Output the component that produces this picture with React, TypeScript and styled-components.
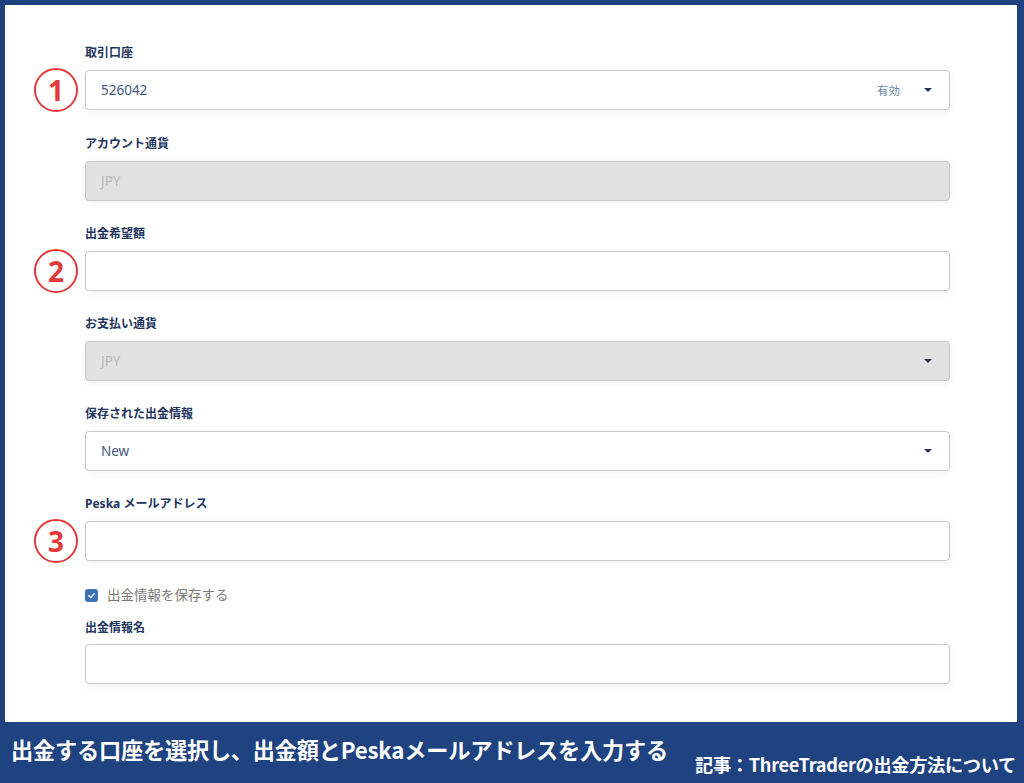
import { createGlobalStyle, styled } from 'styled-components';

const GlobalStyle = createGlobalStyle`
  html, body {
    margin: 0;
    padding: 0;
    background: #1f4381;
  }
  body {
    font-family: "Noto Sans", "Noto Sans CJK JP", sans-serif;
  }
`;

const Page = styled.div`
  width: 1024px;
  height: 783px;
  background: #1f4381;
  display: flex;
  flex-direction: column;
  overflow: hidden;
`;

const Panel = styled.div`
  margin: 5px 7px 0 5px;
  height: 717px;
  background: #ffffff;
  box-sizing: border-box;
  padding-top: 40px;
  display: flex;
  flex-direction: column;
`;

const Field = styled.div<{ $after?: number }>`
  display: grid;
  grid-template-columns: 80px 865px;
  margin-bottom: ${(p) => p.$after ?? 25}px;
`;

const Label = styled.div<{ $gap?: number }>`
  grid-column: 2;
  height: 16px;
  font-size: 12px;
  line-height: 16px;
  font-weight: 700;
  color: #23355c;
  margin-bottom: ${(p) => p.$gap ?? 9}px;
`;

const BadgeCell = styled.div`
  grid-column: 1;
  height: 40px;
  display: flex;
  align-items: center;
  justify-content: flex-end;
  padding-right: 7px;
`;

const Badge = styled.div`
  flex: none;
  width: 44px;
  height: 44px;
  box-sizing: border-box;
  border-radius: 50%;
  border: 2px solid #e23a3a;
  color: #e23a3a;
  display: flex;
  align-items: center;
  justify-content: center;
  font-family: "Noto Sans", sans-serif;
  font-weight: 700;
  font-size: 28px;
  line-height: 1;
`;

const Box = styled.div<{ $disabled?: boolean }>`
  grid-column: 2;
  height: 40px;
  box-sizing: border-box;
  border: 1px solid ${(p) => (p.$disabled ? '#c6c6c6' : '#c9c9c9')};
  border-radius: 4px;
  background: ${(p) => (p.$disabled ? '#e2e2e2' : '#ffffff')};
  box-shadow: 0 2px 8px rgba(0, 0, 0, 0.06);
  display: flex;
  align-items: center;
  padding: 0 16px 0 15px;
`;

const Value = styled.span<{ $muted?: boolean }>`
  flex: 1;
  font-size: 13.5px;
  color: ${(p) => (p.$muted ? '#b9b9b9' : '#45587a')};
`;

const Status = styled.span`
  font-size: 11.5px;
  color: #6b88a6;
  margin-right: 24px;
`;

const Caret = styled.span`
  width: 0;
  height: 0;
  border-left: 4px solid transparent;
  border-right: 4px solid transparent;
  border-top: 4px solid #23355c;
  margin-right: 1px;
`;

const CheckRow = styled.label`
  margin-left: 80px;
  margin-bottom: 15px;
  height: 20px;
  display: flex;
  align-items: center;
  gap: 9px;
  font-size: 13.5px;
  line-height: 20px;
  color: #7a7a7a;
`;

const CheckBox = styled.span`
  width: 13px;
  height: 13px;
  border-radius: 3px;
  background: #3d72b4;
  display: flex;
  align-items: center;
  justify-content: center;
`;

const Caption = styled.div`
  flex: 1;
  display: flex;
  align-items: flex-end;
  justify-content: space-between;
  padding: 0 8px 7px 11px;
  color: #ffffff;
  font-family: "Noto Sans CJK JP", "Noto Sans", sans-serif;
  font-weight: 700;
`;

const Headline = styled.div`
  font-size: 22.2px;
  line-height: 30px;
  padding-bottom: 12px;
  letter-spacing: -0.2px;
`;

const Source = styled.div`
  font-size: 18.2px;
  line-height: 24px;
  letter-spacing: -0.3px;
`;

function Select({ value, status, disabled, muted }: { value: string; status?: string; disabled?: boolean; muted?: boolean }) {
  return (
    <Box $disabled={disabled}>
      <Value $muted={muted}>{value}</Value>
      {status && <Status>{status}</Status>}
      <Caret />
    </Box>
  );
}

export default function App() {
  return (
    <Page>
      <GlobalStyle />
      <Panel>
        <Field $after={26}>
          <Label>取引口座</Label>
          <BadgeCell>
            <Badge>1</Badge>
          </BadgeCell>
          <Select value="526042" status="有効" />
        </Field>
        <Field>
          <Label>アカウント通貨</Label>
          <Box $disabled>
            <Value $muted>JPY</Value>
          </Box>
        </Field>
        <Field>
          <Label>出金希望額</Label>
          <BadgeCell>
            <Badge>2</Badge>
          </BadgeCell>
          <Box />
        </Field>
        <Field>
          <Label>お支払い通貨</Label>
          <Select value="JPY" disabled muted />
        </Field>
        <Field>
          <Label>保存された出金情報</Label>
          <Select value="New" />
        </Field>
        <Field $after={24}>
          <Label>Peska メールアドレス</Label>
          <BadgeCell>
            <Badge>3</Badge>
          </BadgeCell>
          <Box />
        </Field>
        <CheckRow>
          <CheckBox>
            <svg width="9" height="9" viewBox="0 0 10 10">
              <path d="M2 5.2 L4.2 7.3 L8 3" fill="none" stroke="#fff" strokeWidth="1.6" strokeLinecap="round" strokeLinejoin="round" />
            </svg>
          </CheckBox>
          出金情報を保存する
        </CheckRow>
        <Field $after={0}>
          <Label $gap={8}>出金情報名</Label>
          <Box />
        </Field>
      </Panel>
      <Caption>
        <Headline>出金する口座を選択し、出金額とPeskaメールアドレスを入力する</Headline>
        <Source>記事：ThreeTraderの出金方法について</Source>
      </Caption>
    </Page>
  );
}
